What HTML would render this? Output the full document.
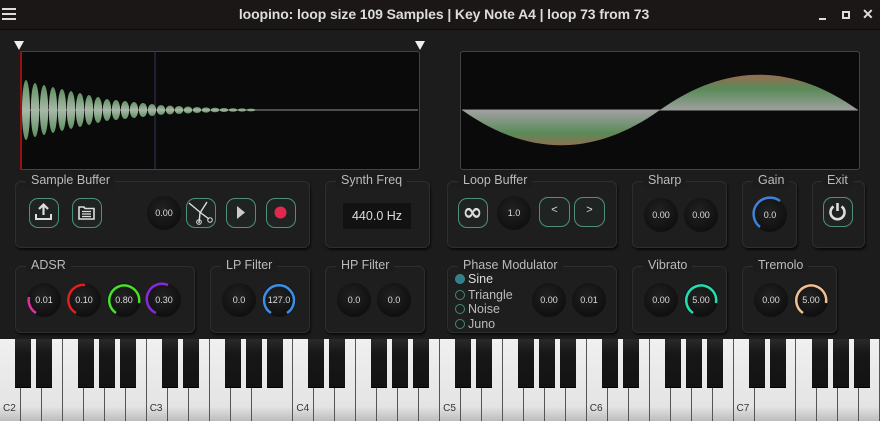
<!DOCTYPE html>
<html><head><meta charset="utf-8"><style>
*{margin:0;padding:0;box-sizing:border-box}
body{width:880px;height:421px;background:#1d1c1c;overflow:hidden;position:relative;font-family:"Liberation Sans",sans-serif;color:#bbb}
.title{position:absolute;left:0;top:0;width:880px;height:30px;background:#1a1716;border-bottom:1px solid #0c0c0c}
.title .t{position:absolute;left:4px;width:880px;top:6px;text-align:center;font-weight:bold;font-size:14px;color:#ddd;letter-spacing:-0.1px}
.panel{position:absolute;border:1px solid #2e2e2e;border-radius:6px;box-shadow:1px 2px 2px #0a0a0a;background:#1e1e1e}
.lbl{position:absolute;top:-9px;background:#1d1c1c;padding:0 5px;font-size:12.5px;color:#bbb;white-space:nowrap}
.btn{position:absolute;width:30px;height:30px;border:1.5px solid #4f9078;border-radius:9px;background:#1f2422}
.wave{position:absolute;background:#0b0a0a;border:1px solid #444;border-radius:3px}
.radio{position:absolute;left:455px;font-size:12.5px;color:#bbb}
.radio i{display:inline-block;width:10px;height:10px;border:1.5px solid #3e8a78;border-radius:50%;margin-right:3px;vertical-align:-1px}
.kb{position:absolute;left:0;top:339px;width:880px;height:82px;background:#e8e8e8}
.w{position:absolute;top:0;height:82px;border-right:1.5px solid #555;background:linear-gradient(#f0f0f0 0%,#e4e4e4 82%,#bdbdbd 100%)}
.b{position:absolute;top:0;width:16px;height:49px;background:linear-gradient(#2a2a2a,#171717 30%,#131313);border-bottom:1px solid #000}
.n{position:absolute;top:64px;font-size:10px;color:#333}
</style></head><body>
<div class="title">
 <div style="position:absolute;left:2px;top:8px;width:14px;height:2px;background:#ddd;box-shadow:0 5px 0 #ddd,0 10px 0 #ddd"></div>
 <div class="t">loopino: loop size 109 Samples | Key Note A4 | loop 73 from 73</div>
 <div style="position:absolute;left:819px;top:18px;width:7px;height:2px;background:#ddd"></div>
 <div style="position:absolute;left:842px;top:11px;width:8px;height:8px;border:2px solid #ddd"></div>
 <div style="position:absolute;left:862px;top:6px;font-size:14px;font-weight:bold;color:#ddd">✕</div>
</div>
<svg style="position:absolute;left:14px;top:41px" width="412" height="10"><polygon points="0,0 10,0 5,9" fill="#eee"/><polygon points="401,0 411,0 406,9" fill="#eee"/></svg>
<div class="wave" style="left:20px;top:51px;width:400px;height:119px"></div>
<svg style="position:absolute;left:20px;top:51px" width="400" height="119">
<defs><linearGradient id="g1" x1="0" y1="0" x2="0" y2="1"><stop offset="0" stop-color="#5f9060"/><stop offset=".5" stop-color="#a8b8a8"/><stop offset="1" stop-color="#5f9060"/></linearGradient></defs>
<line x1="1" y1="0" x2="1" y2="119" stroke="#9a1010" stroke-width="2"/>
<line x1="135" y1="0" x2="135" y2="119" stroke="#34345a" stroke-width="1"/>
<line x1="2" y1="59" x2="398" y2="59" stroke="#777" stroke-width="1.2"/>
<g fill="url(#g1)">
<ellipse cx="6" cy="59" rx="4" ry="30"/><ellipse cx="15" cy="59" rx="4.2" ry="27"/><ellipse cx="24" cy="59" rx="4.2" ry="25"/><ellipse cx="33" cy="59" rx="4.2" ry="23"/><ellipse cx="42" cy="59" rx="4.2" ry="21"/><ellipse cx="51" cy="59" rx="4.2" ry="19"/><ellipse cx="60" cy="59" rx="4.2" ry="17"/><ellipse cx="69" cy="59" rx="4.2" ry="15"/><ellipse cx="78" cy="59" rx="4.2" ry="13"/><ellipse cx="87" cy="59" rx="4.2" ry="11"/><ellipse cx="96" cy="59" rx="4.2" ry="10"/><ellipse cx="105" cy="59" rx="4.2" ry="9"/><ellipse cx="114" cy="59" rx="4.2" ry="8"/><ellipse cx="123" cy="59" rx="4.2" ry="7"/><ellipse cx="132" cy="59" rx="4.2" ry="6"/><ellipse cx="141" cy="59" rx="4.2" ry="5"/><ellipse cx="150" cy="59" rx="4.2" ry="4.5"/><ellipse cx="159" cy="59" rx="4.2" ry="4"/><ellipse cx="168" cy="59" rx="4.2" ry="3.5"/><ellipse cx="177" cy="59" rx="4.2" ry="3"/><ellipse cx="186" cy="59" rx="4.2" ry="2.6"/><ellipse cx="195" cy="59" rx="4.2" ry="2.3"/><ellipse cx="204" cy="59" rx="4.2" ry="2"/><ellipse cx="213" cy="59" rx="4.2" ry="1.8"/><ellipse cx="222" cy="59" rx="4.2" ry="1.6"/><ellipse cx="231" cy="59" rx="4.2" ry="1.4"/>
</g></svg>
<div class="wave" style="left:460px;top:51px;width:400px;height:119px"></div>
<svg style="position:absolute;left:460px;top:51px" width="400" height="119">
<defs><linearGradient id="g2" gradientUnits="userSpaceOnUse" x1="0" y1="23" x2="0" y2="97"><stop offset="0" stop-color="#9a6a50"/><stop offset=".2" stop-color="#5a8a58"/><stop offset=".5" stop-color="#a0a0a0"/><stop offset=".8" stop-color="#5a8a58"/><stop offset="1" stop-color="#9a6a50"/></linearGradient></defs>
<path d="M2,59 C68,106 134,106 200,59 Z" fill="url(#g2)"/>
<path d="M200,59 C266,12 332,12 398,59 Z" fill="url(#g2)"/>
<line x1="2" y1="59" x2="398" y2="59" stroke="#999" stroke-width="1"/>
</svg>

<div class="panel" style="left:15px;top:181px;width:295px;height:67px"><div class="lbl" style="left:10px">Sample Buffer</div></div>
<div class="panel" style="left:325px;top:181px;width:105px;height:67px"><div class="lbl" style="left:10px">Synth Freq</div></div>
<div class="panel" style="left:447px;top:181px;width:170px;height:67px"><div class="lbl" style="left:10px">Loop Buffer</div></div>
<div class="panel" style="left:632px;top:181px;width:95px;height:67px"><div class="lbl" style="left:10px">Sharp</div></div>
<div class="panel" style="left:742px;top:181px;width:55px;height:67px"><div class="lbl" style="left:10px">Gain</div></div>
<div class="panel" style="left:812px;top:181px;width:53px;height:67px"><div class="lbl" style="left:9px">Exit</div></div>
<div class="panel" style="left:15px;top:266px;width:180px;height:67px"><div class="lbl" style="left:10px">ADSR</div></div>
<div class="panel" style="left:210px;top:266px;width:100px;height:67px"><div class="lbl" style="left:10px">LP Filter</div></div>
<div class="panel" style="left:325px;top:266px;width:100px;height:67px"><div class="lbl" style="left:10px">HP Filter</div></div>
<div class="panel" style="left:447px;top:266px;width:170px;height:67px"><div class="lbl" style="left:10px">Phase Modulator</div></div>
<div class="panel" style="left:632px;top:266px;width:95px;height:67px"><div class="lbl" style="left:10px">Vibrato</div></div>
<div class="panel" style="left:742px;top:266px;width:95px;height:67px"><div class="lbl" style="left:10px">Tremolo</div></div>

<div class="btn" style="left:29px;top:198px"><svg width="27" height="27"><path d="M13.5,6 L13.5,16 M9,10 L13.5,5.5 L18,10" stroke="#ddd" stroke-width="2.2" fill="none"/><path d="M6,15 L6,20 L21,20 L21,15" stroke="#ddd" stroke-width="2" fill="none"/></svg></div>
<div class="btn" style="left:72px;top:198px"><svg width="27" height="27"><path d="M6,8 L11,8 L12,9.5 L21,9.5 L21,20 L6,20 Z" stroke="#ddd" stroke-width="1.6" fill="none"/><path d="M9,12.5 H18 M9,15 H18 M9,17.5 H18" stroke="#ddd" stroke-width="1.2"/></svg></div>
<div class="btn" style="left:186px;top:198px"><svg width="27" height="27"><path d="M2,4 L14,14 L22,20 M12,24 L13,14 L20,3" stroke="#ddd" stroke-width="1.4" fill="none"/><circle cx="23" cy="21" r="2.3" stroke="#ddd" fill="none"/><circle cx="12" cy="23" r="2.3" stroke="#ddd" fill="none"/></svg></div>
<div class="btn" style="left:226px;top:198px"><svg width="27" height="27"><polygon points="10,7 18,13.5 10,20" fill="#ccc"/></svg></div>
<div class="btn" style="left:266px;top:198px"><svg width="27" height="27"><circle cx="13.5" cy="13.5" r="6" fill="#e02850"/></svg></div>
<div style="position:absolute;left:343px;top:203px;width:68px;height:26px;background:#121212;font-size:12.5px;color:#ddd;text-align:center;line-height:26px">440.0 Hz</div>
<div class="btn" style="left:458px;top:198px"><svg width="27" height="27"><text x="13.5" y="21" text-anchor="middle" font-size="24" font-weight="bold" fill="#ddd" font-family="DejaVu Sans">∞</text></svg></div>
<div class="btn" style="left:539px;top:197px;width:31px;font-size:11px;color:#ddd;text-align:center;line-height:24px">&lt;</div>
<div class="btn" style="left:574px;top:197px;width:31px;font-size:11px;color:#ddd;text-align:center;line-height:24px">&gt;</div>
<div class="btn" style="left:823px;top:197px"><svg width="27" height="27"><path d="M9.5,8.5 A7,7 0 1 0 17.5,8.5" stroke="#ddd" stroke-width="2.6" fill="none"/><line x1="13.5" y1="5" x2="13.5" y2="13" stroke="#ddd" stroke-width="2.6"/></svg></div>

<div class="radio" style="top:272px;color:#ddd"><i style="background:#2f7f90"></i>Sine</div>
<div class="radio" style="top:288px"><i></i>Triangle</div>
<div class="radio" style="top:302px"><i></i>Noise</div>
<div class="radio" style="top:317px"><i></i>Juno</div>

<svg style="position:absolute;left:0;top:0" width="880" height="340" font-family="Liberation Sans" font-size="9" fill="#ddd" text-anchor="middle">
<defs><radialGradient id="kg" cx=".45" cy=".4" r=".6"><stop offset="0" stop-color="#222"/><stop offset="1" stop-color="#0f0f0f"/></radialGradient></defs>
<circle cx="164" cy="213" r="17" fill="url(#kg)"/><text x="164" y="216">0.00</text>
<circle cx="514" cy="213" r="17" fill="url(#kg)"/><text x="514" y="216">1.0</text>
<circle cx="661" cy="215" r="17" fill="url(#kg)"/><text x="661" y="218">0.00</text>
<circle cx="701" cy="215" r="17" fill="url(#kg)"/><text x="701" y="218">0.00</text>
<circle cx="770" cy="215" r="17" fill="url(#kg)"/><text x="770" y="218">0.0</text>
<path d="M760,227 A15,15 0 0 1 780,201" stroke="#3d82d8" stroke-width="2.5" fill="none"/>
<circle cx="44" cy="300" r="17" fill="url(#kg)"/><text x="44" y="303">0.01</text>
<path d="M36,313 A15,15 0 0 1 29,297" stroke="#e030a0" stroke-width="2.5" fill="none"/>
<circle cx="84" cy="300" r="17" fill="url(#kg)"/><text x="84" y="303">0.10</text>
<path d="M76,313 A15,15 0 0 1 85,285" stroke="#e02020" stroke-width="2.5" fill="none"/>
<circle cx="124" cy="300" r="17" fill="url(#kg)"/><text x="124" y="303">0.80</text>
<path d="M116,313 A15,15 0 1 1 139,303" stroke="#48e028" stroke-width="2.5" fill="none"/>
<circle cx="164" cy="300" r="17" fill="url(#kg)"/><text x="164" y="303">0.30</text>
<path d="M156,313 A15,15 0 0 1 168,285" stroke="#8a28e0" stroke-width="2.5" fill="none"/>
<circle cx="239" cy="300" r="17" fill="url(#kg)"/><text x="239" y="303">0.0</text>
<circle cx="279" cy="300" r="17" fill="url(#kg)"/><text x="279" y="303">127.0</text>
<path d="M271,313 A15,15 0 1 1 287,313" stroke="#3a90e8" stroke-width="2.5" fill="none"/>
<circle cx="354" cy="300" r="17" fill="url(#kg)"/><text x="354" y="303">0.0</text>
<circle cx="394" cy="300" r="17" fill="url(#kg)"/><text x="394" y="303">0.0</text>
<circle cx="549" cy="300" r="17" fill="url(#kg)"/><text x="549" y="303">0.00</text>
<circle cx="589" cy="300" r="17" fill="url(#kg)"/><text x="589" y="303">0.01</text>
<circle cx="661" cy="300" r="17" fill="url(#kg)"/><text x="661" y="303">0.00</text>
<circle cx="701" cy="300" r="17" fill="url(#kg)"/><text x="701" y="303">5.00</text>
<path d="M693,313 A15,15 0 1 1 716,303" stroke="#20e0b0" stroke-width="2.5" fill="none"/>
<circle cx="771" cy="300" r="17" fill="url(#kg)"/><text x="771" y="303">0.00</text>
<circle cx="811" cy="300" r="17" fill="url(#kg)"/><text x="811" y="303">5.00</text>
<path d="M803,313 A15,15 0 1 1 826,303" stroke="#f0c090" stroke-width="2.5" fill="none"/>
</svg>

<div class="kb" id="kb"></div>
<script>
var kb=document.getElementById('kb'),h='',o=146.7,wk=o/7;
for(var i=0;i<43;i++){h+='<div class="w" style="left:'+(i*wk).toFixed(1)+'px;width:'+wk.toFixed(1)+'px"></div>';}
var bo=[15,36,78,99,120];
for(var k=0;k<7;k++){for(var j=0;j<5;j++){var x=k*o+bo[j];if(x<880)h+='<div class="b" style="left:'+x.toFixed(1)+'px"></div>';}
h+='<div class="n" style="left:'+(k*o+3).toFixed(1)+'px">C'+(k+2)+'</div>';}
kb.innerHTML=h;
</script>
</body></html>
